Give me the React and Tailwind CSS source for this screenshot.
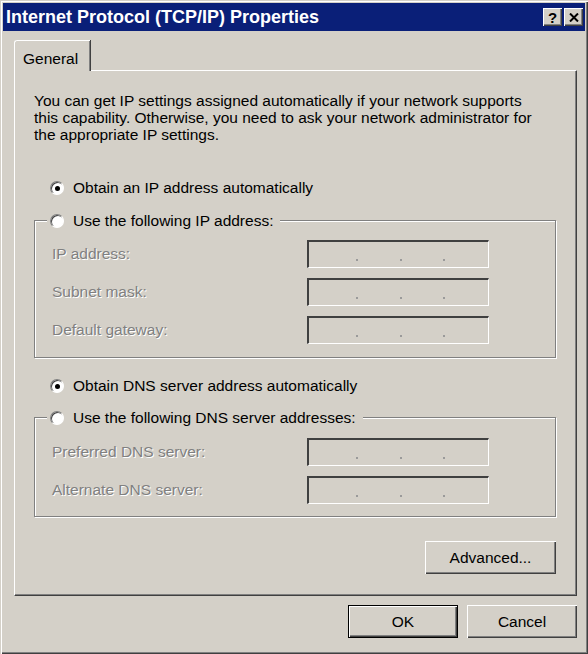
import React from "react";

const FONT = { fontFamily: '"Liberation Sans", Arial, sans-serif' };

// radio button, win2000 style
const Radio = ({ checked }) => (
  <div className="w-[14px] h-[14px] rounded-full bg-white border border-t-[#808080] border-l-[#808080] border-b-white border-r-white shadow-[inset_1px_1px_0_#404040] flex items-center justify-center shrink-0">
    {checked && <div className="w-[5px] h-[5px] rounded-full bg-black" />}
  </div>
);

const IpField = () => (
  <div className="w-[182px] h-[28px] border-t-2 border-l-2 border-t-[#404040] border-l-[#404040] border-b border-r border-b-white border-r-white relative">
    <div className="absolute top-[17px] left-[47px] w-[2px] h-[2px] bg-[#9a9a9a]" />
    <div className="absolute top-[17px] left-[91px] w-[2px] h-[2px] bg-[#9a9a9a]" />
    <div className="absolute top-[17px] left-[134px] w-[2px] h-[2px] bg-[#9a9a9a]" />
  </div>
);

const FieldRow = ({ label }) => (
  <div className="flex items-center h-[28px]">
    <span className="w-[255px] text-[#808080] [text-shadow:1px_1px_0_#fff]">{label}</span>
    <IpField />
  </div>
);

const Group = ({ legend, children, className }) => (
  <div className={"relative border border-[#808080] shadow-[1px_1px_0_#fff,inset_1px_1px_0_#fff] " + className}>
    <div className="absolute -top-[9px] left-[12px] flex items-center gap-[9px] bg-[#d4d0c8] pl-[3px] pr-[7px] h-[18px]">
      <Radio />
      <span>{legend}</span>
    </div>
    {children}
  </div>
);

const Button = ({ children, className, isDefault }) => (
  <div
    className={
      "h-[33px] flex items-center justify-center bg-[#d4d0c8] " +
      (isDefault
        ? "border border-black shadow-[inset_1px_1px_0_#fff,inset_-1px_-1px_0_#404040,inset_-2px_-2px_0_#808080] "
        : "shadow-[inset_1px_1px_0_#fff,inset_-1px_-1px_0_#404040,inset_-2px_-2px_0_#808080] ") +
      className
    }
  >
    {children}
  </div>
);

export default function App() {
  return (
    <div
      style={FONT}
      className="w-[588px] h-[654px] bg-[#d4d0c8] text-[15.5px] text-black p-[3px] shadow-[inset_1px_1px_0_#d4d0c8,inset_2px_2px_0_#fff,inset_-1px_-1px_0_#404040,inset_-2px_-2px_0_#808080] flex flex-col"
    >
      {/* title bar */}
      <div className="h-[28px] bg-[#0a1f78] flex items-center justify-between pl-[3px] pr-[2px]">
        <span className="text-white font-bold text-[18px] leading-none">
          Internet Protocol (TCP/IP) Properties
        </span>
        <div className="flex gap-[2px]">
          <div className="w-[19px] h-[18px] bg-[#d4d0c8] shadow-[inset_1px_1px_0_#fff,inset_-1px_-1px_0_#404040,inset_-2px_-2px_0_#808080] flex items-center justify-center font-bold text-[15px] leading-none">
            ?
          </div>
          <div className="w-[19px] h-[18px] bg-[#d4d0c8] shadow-[inset_1px_1px_0_#fff,inset_-1px_-1px_0_#404040,inset_-2px_-2px_0_#808080] flex items-center justify-center">
            <svg width="10" height="9" viewBox="0 0 10 9">
              <path d="M1 0.5 L9 8.5 M9 0.5 L1 8.5" stroke="#000" strokeWidth="2" />
            </svg>
          </div>
        </div>
      </div>

      {/* body */}
      <div className="flex-1 pl-[11px] pr-[8px] pt-[9px] flex flex-col">
        {/* tab */}
        <div className="flex">
          <div className="h-[31px] w-[76px] pl-[8px] pt-[6px] border-t border-l border-white rounded-tl-[3px] shadow-[inset_-1px_0_0_#808080,1px_0_0_#404040] relative z-10 -mb-px bg-[#d4d0c8]">
            General
          </div>
        </div>

        {/* panel */}
        <div className="h-[526px] border-t border-l border-white border-r border-b border-r-[#404040] border-b-[#404040] shadow-[inset_-1px_-1px_0_#808080] pl-[19px] pr-[20px] pt-[21px] flex flex-col">
          <p className="leading-[17px] pr-[14px]">
            You can get IP settings assigned automatically if your network supports this capability. Otherwise, you need to ask your network administrator for the appropriate IP settings.
          </p>

          <div className="mt-[36px] h-[18px] flex items-center gap-[9px] pl-[16px]">
            <Radio checked />
            <span>Obtain an IP address automatically</span>
          </div>

          <Group legend="Use the following IP address:" className="mt-[23px] h-[138px] pl-[17px] pt-[19px] flex flex-col gap-[10px]">
            <FieldRow label="IP address:" />
            <FieldRow label="Subnet mask:" />
            <FieldRow label="Default gateway:" />
          </Group>

          <div className="mt-[19px] h-[18px] flex items-center gap-[9px] pl-[16px]">
            <Radio checked />
            <span>Obtain DNS server address automatically</span>
          </div>

          <Group legend="Use the following DNS server addresses:" className="mt-[22px] h-[100px] pl-[17px] pt-[20px] flex flex-col gap-[10px]">
            <FieldRow label="Preferred DNS server:" />
            <FieldRow label="Alternate DNS server:" />
          </Group>

          <div className="mt-[24px] flex justify-end">
            <Button className="w-[131px]">Advanced...</Button>
          </div>
        </div>

        {/* bottom buttons */}
        <div className="mt-[9px] flex justify-end gap-[9px]">
          <Button isDefault className="w-[110px]">OK</Button>
          <Button className="w-[110px]">Cancel</Button>
        </div>
      </div>
    </div>
  );
}
